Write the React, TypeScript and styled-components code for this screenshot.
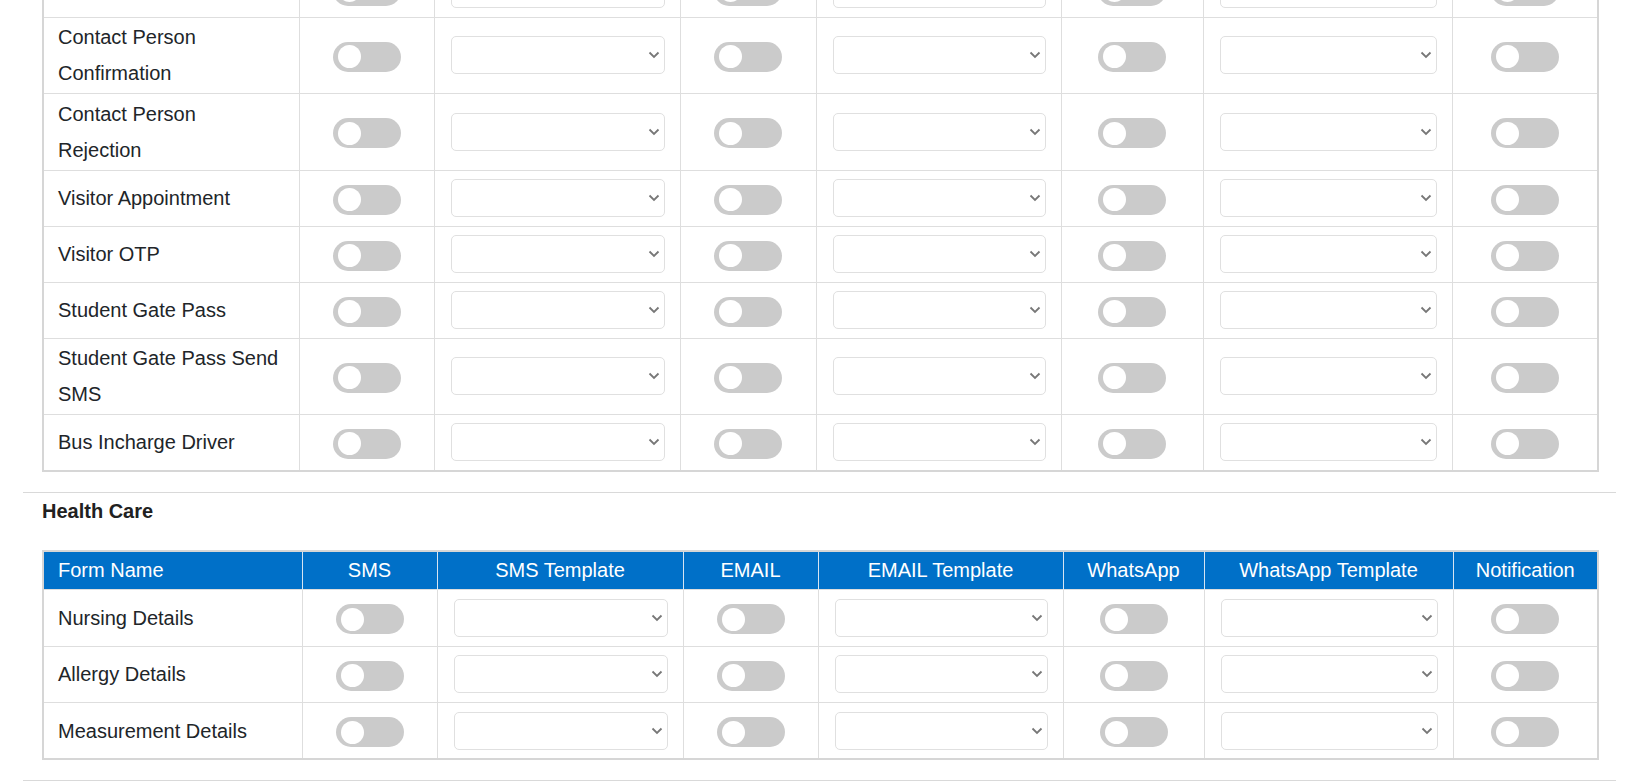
import styled, { createGlobalStyle } from "styled-components";

const GlobalStyle = createGlobalStyle`
    * {
        box-sizing: border-box;
    }
    body {
        margin: 0;
        background: #ffffff;
        font-family: "Liberation Sans", Arial, sans-serif;
        color: #212529;
    }
`;

const Page = styled.div`
    padding: 0 23px;
    margin-top: -40px;
`;

const Section = styled.section`
    padding: 0 19px;
`;

const Divider = styled.hr`
    margin: 20px 0 0;
    border: 0;
    border-top: 1px solid #d9d9d9;
`;

const SectionTitle = styled.h4`
    margin: 0 0 21px;
    font-size: 20px;
    font-weight: bold;
    line-height: 36px;
    color: #212121;
`;

const Table = styled.table<{ $rowHeight: number }>`
    width: 100%;
    table-layout: fixed;
    border-collapse: collapse;
    border: 2px solid #d6d6d6;
    font-size: 20px;

    tbody td {
        height: ${(p) => p.$rowHeight}px;
    }
`;

const HeadCell = styled.th<{ $left?: boolean }>`
    height: 39px;
    padding: 0 14px;
    background: #0070c8;
    color: #ffffff;
    font-weight: normal;
    line-height: 36px;
    text-align: ${(p) => (p.$left ? "left" : "center")};
    border: 1px solid #d6e4f2;
    border-bottom: 0;
    white-space: nowrap;
`;

const Cell = styled.td<{ $center?: boolean }>`
    padding: 1.75px 14px;
    border: 1px solid #dedede;
    line-height: 36px;
    vertical-align: middle;
    text-align: ${(p) => (p.$center ? "center" : "left")};
`;

const SelectCell = styled.td`
    padding: 1.75px 15px 1.75px 16px;
    border: 1px solid #dedede;
    vertical-align: middle;
`;

const SelectWrap = styled.div`
    position: relative;
`;

const Select = styled.select`
    display: block;
    width: 100%;
    height: 38px;
    padding: 0 24px 0 10px;
    border: 1px solid #e0e0e0;
    border-radius: 5px;
    background: #ffffff;
    appearance: none;
    font: inherit;
    font-size: 16px;
    color: #212529;
`;

const Chevron = styled.svg`
    position: absolute;
    right: 5px;
    top: 15px;
    pointer-events: none;
`;

const Switch = styled.span`
    display: inline-flex;
    align-items: center;
    width: 68px;
    height: 30px;
    padding-left: 5px;
    border-radius: 15px;
    background: #cbcbcb;
    vertical-align: middle;
`;

const Knob = styled.span`
    width: 23px;
    height: 23px;
    border-radius: 50%;
    background: #ffffff;
`;

const Toggle = () => (
    <Switch>
        <Knob />
    </Switch>
);

const TemplateSelect = () => (
    <SelectWrap>
        <Select defaultValue="">
            <option value=""></option>
        </Select>
        <Chevron width="12" height="8" viewBox="0 0 12 8">
            <path d="M1.5 1.5l4.5 4.5 4.5-4.5" fill="none" stroke="#777" strokeWidth="1.8" />
        </Chevron>
    </SelectWrap>
);

const topCols = [256, 135, 246, 136, 245, 142, 249, 146];
const bottomCols = [259, 135, 246, 135, 245, 141, 249, 145];

const headers = [
    "Form Name",
    "SMS",
    "SMS Template",
    "EMAIL",
    "EMAIL Template",
    "WhatsApp",
    "WhatsApp Template",
    "Notification",
];

// first entry is the row scrolled just out of view
const visitorForms = [
    "",
    "Contact Person Confirmation",
    "Contact Person Rejection",
    "Visitor Appointment",
    "Visitor OTP",
    "Student Gate Pass",
    "Student Gate Pass Send SMS",
    "Bus Incharge Driver",
];

const healthForms = ["Nursing Details", "Allergy Details", "Measurement Details"];

const FormRow = ({ name }: { name: string }) => (
    <tr>
        <Cell>{name}</Cell>
        <Cell $center>
            <Toggle />
        </Cell>
        <SelectCell>
            <TemplateSelect />
        </SelectCell>
        <Cell $center>
            <Toggle />
        </Cell>
        <SelectCell>
            <TemplateSelect />
        </SelectCell>
        <Cell $center>
            <Toggle />
        </Cell>
        <SelectCell>
            <TemplateSelect />
        </SelectCell>
        <Cell $center>
            <Toggle />
        </Cell>
    </tr>
);

const ColGroup = ({ widths }: { widths: number[] }) => (
    <colgroup>
        {widths.map((w, i) => (
            <col key={i} style={{ width: w }} />
        ))}
    </colgroup>
);

const App = () => {
    return (
        <>
            <GlobalStyle />
            <Page>
                <Section>
                    <Table $rowHeight={56}>
                        <ColGroup widths={topCols} />
                        <tbody>
                            {visitorForms.map((f, i) => (
                                <FormRow key={i} name={f} />
                            ))}
                        </tbody>
                    </Table>
                </Section>
                <Divider />
                <Section>
                    <SectionTitle>Health Care</SectionTitle>
                    <Table $rowHeight={56.5}>
                        <ColGroup widths={bottomCols} />
                        <thead>
                            <tr>
                                {headers.map((h, i) => (
                                    <HeadCell key={h} $left={i === 0}>
                                        {h}
                                    </HeadCell>
                                ))}
                            </tr>
                        </thead>
                        <tbody>
                            {healthForms.map((f) => (
                                <FormRow key={f} name={f} />
                            ))}
                        </tbody>
                    </Table>
                </Section>
                <Divider />
            </Page>
        </>
    );
};

export default App;
